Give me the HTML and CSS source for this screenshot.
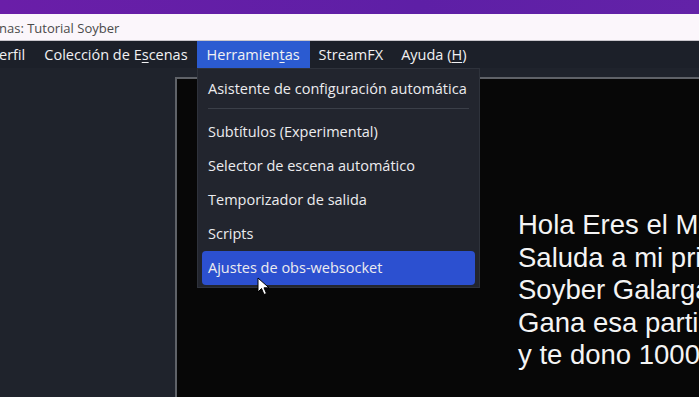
FILE: index.html
```html
<!DOCTYPE html>
<html lang="es">
<head>
    <meta charset="UTF-8">
    <title>OBS - Herramientas</title>
    <link rel="stylesheet" href="styles.css">
</head>
<body>
    <div class="top-strip"></div>
    <div class="titlebar">nas: Tutorial Soyber</div>
    <div class="menubar">
        <span class="menu-item first">erfil</span>
        <span class="menu-item">Colección de E<u>s</u>cenas</span>
        <span class="menu-item active">Herramien<u>t</u>as</span>
        <span class="menu-item">StreamFX</span>
        <span class="menu-item">Ayuda (<u>H</u>)</span>
    </div>
    <div class="workspace">
        <div class="sidebar"></div>
        <div class="preview">
            <div class="preview-text">
                Hola Eres el Mejor<br>
                Saluda a mi primo<br>
                Soyber Galargas<br>
                Gana esa partida<br>
                y te dono 1000
            </div>
        </div>

        <div class="dropdown">
            <div class="drop-item">Asistente de configuración automática</div>
            <div class="drop-sep"></div>
            <div class="drop-item">Subtítulos (Experimental)</div>
            <div class="drop-item">Selector de escena automático</div>
            <div class="drop-item">Temporizador de salida</div>
            <div class="drop-item">Scripts</div>
            <div class="drop-item selected">Ajustes de obs-websocket</div>
        </div>

        <svg class="cursor" width="14" height="20" viewBox="0 0 14 20">
            <path d="M1 1 L1 15 L4.5 11.5 L7 17.5 L9.5 16.5 L7 10.8 L12 10.8 Z" fill="#fff" stroke="#000" stroke-width="1"/>
        </svg>
    </div>
</body>
</html>
```

FILE: styles.css
```css
body {
    margin: 0;
    padding: 0;
    width: 699px;
    height: 397px;
    overflow: hidden;
    background-color: #1f232c;
    font-family: "Open Sans", "Noto Sans", sans-serif;
}

.top-strip {
    height: 14px;
    background: linear-gradient(to right, #6a1ea8, #5e1fa6 60%, #6322a8);
}

.titlebar {
    height: 27px;
    background-color: #fbf6fb;
    color: #4a4a4a;
    font-size: 13px;
    line-height: 28px;
    box-sizing: border-box;
    border-bottom: 1px solid #c9c6cc;
    margin-left: -1px;
}

.menubar {
    height: 27px;
    background-color: #1c2029;
    display: flex;
    color: #f1f1f3;
    font-size: 14.5px;
    line-height: 27px;
}

.menu-item {
    padding: 0 9px;
}

.menu-item.first {
    padding-left: 0;
    margin-left: -1px;
    padding-right: 10px;
}

.menu-item u {
    text-underline-offset: 2px;
}

.menu-item.active {
    background-color: #2b5bd1;
    padding: 0 10px;
}

.workspace {
    position: relative;
    display: flex;
    height: 329px;
}

.sidebar {
    width: 175px;
    flex-shrink: 0;
    background-color: #1f232c;
}

.preview {
    flex: 1;
    min-width: 0;
    overflow: hidden;
    margin-top: 9px;
    background-color: #070707;
    border-left: 2px solid #5f6268;
    border-top: 2px solid #5f6268;
}

.preview-text {
    margin-top: 130px;
    margin-left: 341px;
    color: #f4f4f4;
    font-family: "Liberation Sans", Arial, sans-serif;
    font-size: 27.5px;
    line-height: 32.5px;
    white-space: nowrap;
}

.dropdown {
    position: absolute;
    left: 197px;
    top: 0;
    width: 283px;
    height: 220px;
    box-sizing: border-box;
    background-color: #22252e;
    border: 1px solid #2e323b;
    padding: 3px 4px;
    color: #ececef;
    font-size: 14.5px;
}

.drop-item {
    height: 34px;
    line-height: 34px;
    padding-left: 6px;
    border-radius: 4px;
    white-space: nowrap;
}

.drop-sep {
    height: 1px;
    background-color: #3b3f48;
    margin: 2px 6px 6px 6px;
}

.drop-item.selected {
    background-color: #2c50d0;
}

.cursor {
    position: absolute;
    left: 257px;
    top: 209px;
}
```
